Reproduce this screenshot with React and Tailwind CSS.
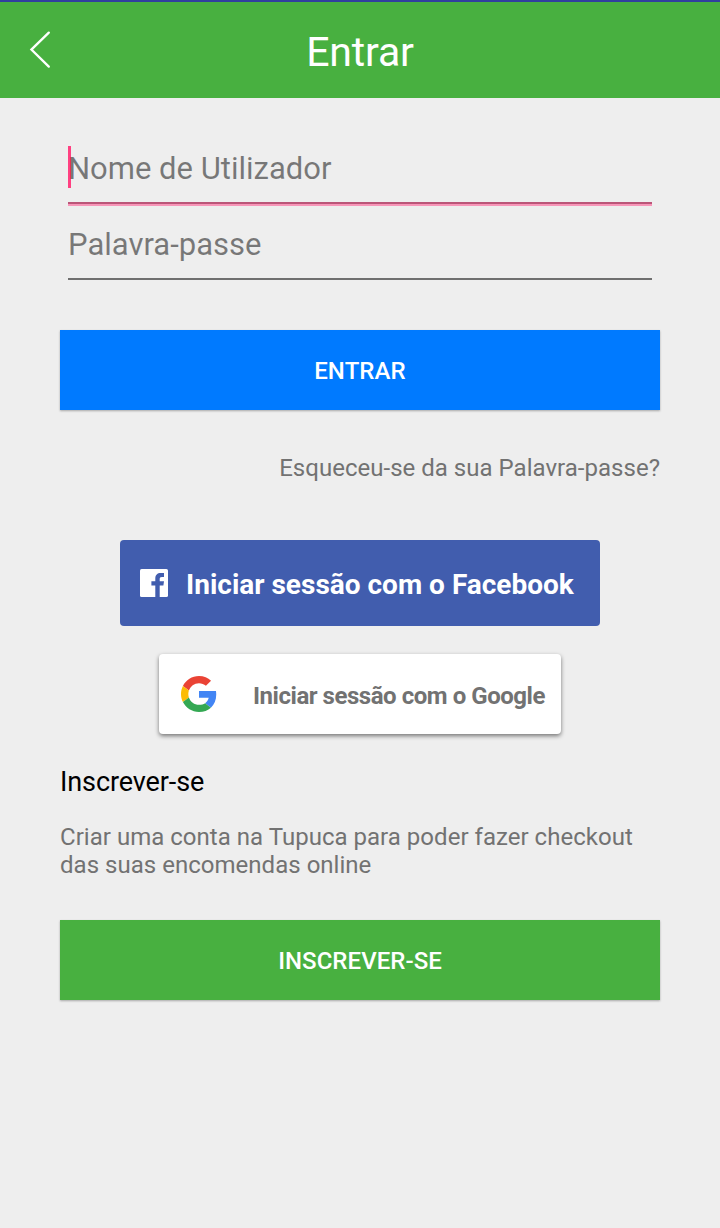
import { useState } from "react";

const inputCls =
  "relative block w-full bg-transparent p-0 text-[31px] leading-[36px] text-[#757575] placeholder:text-black/51 placeholder:opacity-100 caret-transparent focus:outline-none";

function Header({ title }) {
  return (
    <header className="relative flex h-[98px] items-center justify-center border-t-2 border-[#303f9f] bg-[#48b040] pt-[4px]">
      <button aria-label="Voltar" className="absolute left-[28px] top-[28px]">
        <svg width="24" height="40" viewBox="0 0 24 40" fill="none">
          <path d="M20.8 2.6L3.400 19.600L20.800 36.600" stroke="#fff" strokeWidth="2.3" strokeLinecap="round" />
        </svg>
      </button>
      <h1 className="text-[41px] leading-[48px] tracking-[-0.2px] text-white">{title}</h1>
    </header>
  );
}

function FacebookIcon() {
  return (
    <svg width="28" height="28" viewBox="0 0 28 28" className="shrink-0">
      <rect width="28" height="28" rx="1.6" fill="#fff" />
      <path
        fill="#415dae"
        d="M15.300 28V16.500H11.400V12.200H15.300V9.400C15.300 5.900 17.400 4 20.700 4H24V8H21.900C20.100 8 19.700 8.900 19.700 10.200V12.200H24L23.400 16.500H19.700V28Z"
      />
    </svg>
  );
}

function GoogleIcon() {
  return (
    <svg width="36" height="36" viewBox="0 0 48 48" className="shrink-0">
      <path fill="#EA4335" d="M24 9.5c3.54 0 6.71 1.22 9.21 3.6l6.85-6.85C35.9 2.38 30.47 0 24 0 14.62 0 6.51 5.38 2.56 13.22l7.98 6.19C12.43 13.72 17.74 9.5 24 9.5z" />
      <path fill="#4285F4" d="M46.98 24.55c0-1.57-.15-3.09-.38-4.55H24v9.02h12.94c-.58 2.96-2.26 5.48-4.78 7.18l7.73 6c4.51-4.18 7.09-10.36 7.09-17.65z" />
      <path fill="#FBBC05" d="M10.53 28.59c-.48-1.45-.76-2.99-.76-4.59s.27-3.14.76-4.59l-7.98-6.19C.92 16.46 0 20.12 0 24c0 3.88.92 7.54 2.56 10.78l7.97-6.19z" />
      <path fill="#34A853" d="M24 48c6.48 0 11.93-2.13 15.89-5.81l-7.73-6c-2.15 1.45-4.92 2.3-8.16 2.3-6.26 0-11.57-4.22-13.47-9.91l-7.98 6.19C6.51 42.62 14.62 48 24 48z" />
    </svg>
  );
}

export default function App() {
  const [username, setUsername] = useState("");
  const [password, setPassword] = useState("");

  return (
    <div className="min-h-[1228px] w-full bg-[#eee] font-['Roboto',sans-serif]">
      <Header title="Entrar" />

      <main className="flex flex-col px-[60px]">
        <form className="px-2" onSubmit={(e) => e.preventDefault()}>
          <div className="relative mt-[48px] h-[58px] border-b-2 border-[#bb5578] pt-[5px] shadow-[0_2px_0_#f795b8]">
            {/* text cursor of the focused field */}
            <span className="absolute left-0 top-0 h-[42px] w-[3px] bg-[#ff4081]" />
            <input
              aria-label="Nome de Utilizador"
              placeholder="Nome de Utilizador"
              value={username}
              onChange={(e) => setUsername(e.target.value)}
              className={inputCls}
            />
          </div>
          <div className="mt-[18px] h-[58px] border-b-2 border-[#6f6f6f] pt-[5px]">
            <input
              type="password"
              aria-label="Palavra-passe"
              placeholder="Palavra-passe"
              value={password}
              onChange={(e) => setPassword(e.target.value)}
              className={inputCls}
            />
          </div>
        </form>

        <button className="mt-[50px] h-20 bg-[#007aff] pt-[2px] text-[24px] font-medium tracking-[0.1px] text-white shadow-[0_1px_2px_rgba(0,0,0,0.3)]">
          ENTRAR
        </button>

        <a className="mt-[44px] self-end text-[24px] leading-[28px] tracking-[0.02px] text-[#727272]">
          Esqueceu-se da sua Palavra-passe?
        </a>

        <button className="mt-[58px] flex h-[86px] w-[480px] items-center self-center rounded-[4px] bg-[#415dae] pl-5 text-[28px] font-bold text-white">
          <FacebookIcon />
          <span className="ml-[18px] whitespace-nowrap pt-[3px]">Iniciar sessão com o Facebook</span>
        </button>

        <button className="mt-[28px] flex h-20 w-[402px] items-center self-center rounded-[4px] bg-white pl-[22px] text-[24px] font-bold tracking-[-0.46px] text-[#727272] shadow-[0_2px_4px_rgba(0,0,0,0.5)]">
          <GoogleIcon />
          <span className="ml-[36px] whitespace-nowrap pt-[3px]">Iniciar sessão com o Google</span>
        </button>

        <h2 className="mt-[32px] text-[27px] leading-[32px] tracking-[-0.1px] text-black">Inscrever-se</h2>
        <p className="mt-[25px] text-[24px] leading-[28px] tracking-[0.025px] text-[#727272]">
          Criar uma conta na Tupuca para poder fazer checkout
          <br />
          das suas encomendas online
        </p>

        <button className="mt-[41px] h-20 bg-[#48b040] pt-[2px] text-[24px] font-medium tracking-[0.05px] text-white shadow-[0_1px_2px_rgba(0,0,0,0.3)]">
          INSCREVER-SE
        </button>
      </main>
    </div>
  );
}
